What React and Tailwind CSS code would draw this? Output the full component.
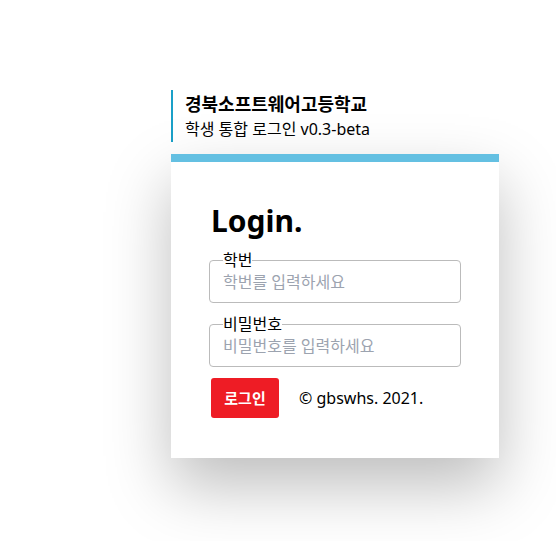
export default function App() {
  return (
    <div
      className="min-h-[541px] bg-white pl-[171px] pt-[90px]"
      style={{ fontFamily: '"Noto Sans", "Noto Sans CJK KR", sans-serif' }}
    >
      <div className="w-[328px]">
        {/* Header */}
        <div className="border-l-2 border-[#1aa0c8] pl-3 h-[52px] flex flex-col justify-center">
          <h1 className="text-[18px] font-bold leading-[26px] text-black">경북소프트웨어고등학교</h1>
          <p className="text-[16px] leading-[24px] text-black">학생 통합 로그인 v0.3-beta</p>
        </div>

        {/* Card */}
        <div className="mt-3 bg-white border-t-8 border-[#64c0e2] shadow-[0_28px_60px_rgba(0,0,0,0.26)] pl-[38px] pr-[38px] pt-10 pb-10">
          <h2 className="pl-[2px] text-[30px] font-bold leading-[38px] text-black">Login.</h2>

          <fieldset className="mt-[10px] border border-[#bbbbbb] rounded px-[13px] pb-[8px]">
            <legend className="text-base leading-5 text-black">학번</legend>
            <input
              type="text"
              placeholder="학번를 입력하세요"
              className="block w-full h-6 text-base outline-none placeholder:text-[#9ca3af]"
            />
          </fieldset>

          <fieldset className="mt-[11px] border border-[#bbbbbb] rounded px-[13px] pb-[8px]">
            <legend className="text-base leading-5 text-black">비밀번호</legend>
            <input
              type="password"
              placeholder="비밀번호를 입력하세요"
              className="block w-full h-6 text-base outline-none placeholder:text-[#9ca3af]"
            />
          </fieldset>

          <div className="mt-[11px] pl-[2px] flex items-center gap-5">
            <button className="w-[68px] h-10 bg-[#ee1c25] rounded-[3px] text-white font-bold text-[15px]">
              로그인
            </button>
            <span className="text-base text-black">© gbswhs. 2021.</span>
          </div>
        </div>
      </div>
    </div>
  );
}
